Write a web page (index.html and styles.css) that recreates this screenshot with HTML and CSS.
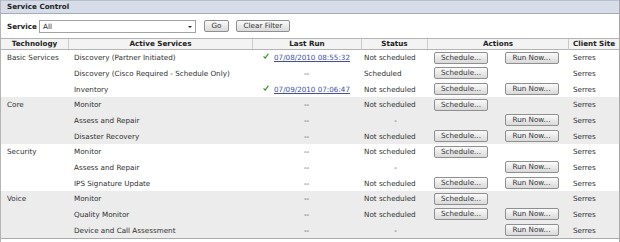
FILE: index.html
```html
<!DOCTYPE html>
<html>
<head>
  <meta charset="utf-8">
  <title>Service Control</title>
  <link rel="stylesheet" href="styles.css">
</head>
<body>
<div class="panel">
  <div class="title">Service Control</div>

  <div class="filter">
    <span class="filter-label">Service</span>
    <div class="select">All<span class="arrow"></span></div>
    <button class="btn btn-go">Go</button>
    <button class="btn btn-clear">Clear Filter</button>
  </div>

  <table class="services">
    <colgroup>
      <col style="width:67px">
      <col style="width:184px">
      <col style="width:109px">
      <col style="width:66px">
      <col style="width:68px">
      <col style="width:73px">
      <col style="width:51px">
    </colgroup>
    <thead>
      <tr>
        <th class="first">Technology</th>
        <th>Active Services</th>
        <th>Last Run</th>
        <th>Status</th>
        <th colspan="2">Actions</th>
        <th>Client Site</th>
      </tr>
    </thead>
    <tbody>
      <tr>
        <td>Basic Services</td>
        <td>Discovery (Partner Initiated)</td>
        <td class="run"><svg class="check" width="6" height="6" viewBox="0 0 6 6"><path d="M0.6 3.4 L2.2 5.2 L5.4 0.6" fill="none" stroke="#3a9a2e" stroke-width="1.2"/></svg><a href="#">07/08/2010 08:55:32</a></td>
        <td>Not scheduled</td>
        <td class="act"><button class="btn">Schedule...</button></td>
        <td class="act"><button class="btn">Run Now...</button></td>
        <td>Serres</td>
      </tr>
      <tr>
        <td></td>
        <td>Discovery (Cisco Required - Schedule Only)</td>
        <td class="run">--</td>
        <td>Scheduled</td>
        <td class="act"><button class="btn">Schedule...</button></td>
        <td class="act"></td>
        <td>Serres</td>
      </tr>
      <tr>
        <td></td>
        <td>Inventory</td>
        <td class="run"><svg class="check" width="6" height="6" viewBox="0 0 6 6"><path d="M0.6 3.4 L2.2 5.2 L5.4 0.6" fill="none" stroke="#3a9a2e" stroke-width="1.2"/></svg><a href="#">07/09/2010 07:06:47</a></td>
        <td>Not scheduled</td>
        <td class="act"><button class="btn">Schedule...</button></td>
        <td class="act"><button class="btn">Run Now...</button></td>
        <td>Serres</td>
      </tr>

      <tr class="alt">
        <td>Core</td>
        <td>Monitor</td>
        <td class="run">--</td>
        <td>Not scheduled</td>
        <td class="act"><button class="btn">Schedule...</button></td>
        <td class="act"></td>
        <td>Serres</td>
      </tr>
      <tr class="alt">
        <td></td>
        <td>Assess and Repair</td>
        <td class="run">--</td>
        <td class="none">-</td>
        <td class="act"></td>
        <td class="act"><button class="btn">Run Now...</button></td>
        <td>Serres</td>
      </tr>
      <tr class="alt">
        <td></td>
        <td>Disaster Recovery</td>
        <td class="run">--</td>
        <td>Not scheduled</td>
        <td class="act"><button class="btn">Schedule...</button></td>
        <td class="act"><button class="btn">Run Now...</button></td>
        <td>Serres</td>
      </tr>

      <tr>
        <td>Security</td>
        <td>Monitor</td>
        <td class="run">--</td>
        <td>Not scheduled</td>
        <td class="act"><button class="btn">Schedule...</button></td>
        <td class="act"></td>
        <td>Serres</td>
      </tr>
      <tr>
        <td></td>
        <td>Assess and Repair</td>
        <td class="run">--</td>
        <td class="none">-</td>
        <td class="act"></td>
        <td class="act"><button class="btn">Run Now...</button></td>
        <td>Serres</td>
      </tr>
      <tr>
        <td></td>
        <td>IPS Signature Update</td>
        <td class="run">--</td>
        <td>Not scheduled</td>
        <td class="act"><button class="btn">Schedule...</button></td>
        <td class="act"><button class="btn">Run Now...</button></td>
        <td>Serres</td>
      </tr>

      <tr class="alt">
        <td>Voice</td>
        <td>Monitor</td>
        <td class="run">--</td>
        <td>Not scheduled</td>
        <td class="act"><button class="btn">Schedule...</button></td>
        <td class="act"></td>
        <td>Serres</td>
      </tr>
      <tr class="alt">
        <td></td>
        <td>Quality Monitor</td>
        <td class="run">--</td>
        <td>Not scheduled</td>
        <td class="act"><button class="btn">Schedule...</button></td>
        <td class="act"><button class="btn">Run Now...</button></td>
        <td>Serres</td>
      </tr>
      <tr class="alt">
        <td></td>
        <td>Device and Call Assessment</td>
        <td class="run">--</td>
        <td class="none">-</td>
        <td class="act"></td>
        <td class="act"><button class="btn">Run Now...</button></td>
        <td>Serres</td>
      </tr>
    </tbody>
  </table>
</div>
</body>
</html>
```

FILE: styles.css
```css
body {
  margin: 0;
  padding: 0;
  background-color: #fff;
}

.panel {
  width: 620px;
  height: 242px;
  box-sizing: border-box;
  border-left: 1px solid #b4b4b4;
  border-right: 1px solid #a8a8a8;
  font-family: "DejaVu Sans", Verdana, sans-serif;
  font-size: 7.2px;
  color: #2e2e2e;
  overflow: hidden;
}

/* title bar */
.title {
  height: 12px;
  line-height: 12px;
  padding-left: 6px;
  font-weight: bold;
  color: #222;
  background-color: #d6dde9;
  border-top: 1px solid #b7bfcc;
  border-bottom: 1px solid #a4acba;
}

/* filter row */
.filter {
  height: 24px;
  display: flex;
  align-items: center;
  padding-left: 6px;
}

.filter-label {
  font-weight: bold;
  color: #222;
  width: 32px;
}

.select {
  position: relative;
  width: 157px;
  height: 13px;
  line-height: 11px;
  box-sizing: border-box;
  border: 1px solid #a3a3a3;
  padding-left: 3px;
  margin-right: 8px;
  background-color: #fff;
}

.select .arrow {
  position: absolute;
  right: 3px;
  top: 5px;
  border-left: 2px solid transparent;
  border-right: 2px solid transparent;
  border-top: 2px solid #222;
}

.btn {
  height: 12px;
  width: 54px;
  padding: 0;
  box-sizing: border-box;
  font-family: "DejaVu Sans", Verdana, sans-serif;
  font-size: 7.2px;
  line-height: 10px;
  color: #333;
  border: 1px solid #8f8f8f;
  border-radius: 2px;
  background: linear-gradient(#fbfbfb, #e6e6e6 60%, #d9d9d9);
}

.btn-go {
  width: 25px;
  margin-right: 7px;
}

/* table */
.services {
  width: 618px;
  table-layout: fixed;
  border-collapse: separate;
  border-spacing: 0;
  border-bottom: 1px solid #ababab;
}

.services th {
  height: 10px;
  line-height: 10px;
  padding: 0;
  font-weight: bold;
  color: #222;
  text-align: center;
  background-color: #f3f3f3;
  border-top: 1px solid #b3b3b3;
  border-bottom: 1px solid #b3b3b3;
  border-left: 1px solid #c9c9c9;
}

.services th.first {
  border-left: none;
}

.services td {
  height: 15.67px;
  padding: 0 0 0 6px;
  white-space: nowrap;
  overflow: hidden;
}

.services tr.alt td {
  background-color: #ececec;
}

.services td.run {
  text-align: center;
  padding: 0;
}

.services td.none {
  text-align: center;
  padding: 0;
}

.services td.act {
  text-align: center;
  padding: 0;
}

.services td:nth-child(4) {
  padding-left: 3px;
}

.services td:last-child {
  padding-left: 5px;
}

.check {
  vertical-align: 1px;
  margin-right: 5px;
}

.run a {
  color: #3d4f9e;
  text-decoration: underline;
}
```
